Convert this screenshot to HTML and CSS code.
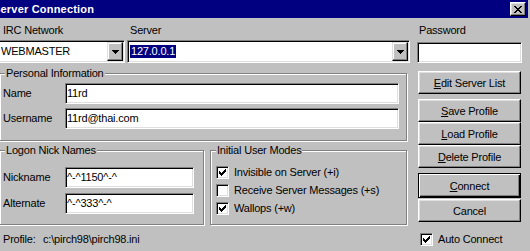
FILE: index.html
```html
<!DOCTYPE html>
<html>
<head>
<meta charset="utf-8">
<title>Server Connection</title>
<link rel="stylesheet" href="styles.css">
</head>
<body>
<div class="window">
  <div class="titlebar">
    <span class="title">Server Connection</span>
    <button class="close" aria-label="Close">
      <svg width="8" height="7" viewBox="0 0 8 7" shape-rendering="crispEdges"><path fill="#000" d="M0 0h2v1h-2z M6 0h2v1h-2z M1 1h2v1h-2z M5 1h2v1h-2z M2 2h4v1h-4z M3 3h2v1h-2z M2 4h4v1h-4z M1 5h2v1h-2z M5 5h2v1h-2z M0 6h2v1h-2z M6 6h2v1h-2z"/></svg>
    </button>
  </div>
  <div class="dialog">
    <div class="col-left">
      <div class="server-grid">
        <span class="lbl lbl-net">IRC Network</span>
        <span class="lbl lbl-server">Server</span>
        <div class="combo">
          <span class="combo-text combo-net">WEBMASTER</span>
          <span class="drop"><svg width="7" height="4" viewBox="0 0 7 4" shape-rendering="crispEdges"><path fill="#000" d="M0 0h7v1h-7z M1 1h5v1h-5z M2 2h3v1h-3z M3 3h1v1h-1z"/></svg></span>
        </div>
        <div class="combo">
          <span class="combo-text combo-server"><span class="sel">127.0.0.1</span></span>
          <span class="drop"><svg width="7" height="4" viewBox="0 0 7 4" shape-rendering="crispEdges"><path fill="#000" d="M0 0h7v1h-7z M1 1h5v1h-5z M2 2h3v1h-3z M3 3h1v1h-1z"/></svg></span>
        </div>
      </div>

      <fieldset class="group group-personal">
        <legend>Personal Information</legend>
        <div class="field-row"><span class="flabel">Name</span><div class="edit edit-wide">11rd</div></div>
        <div class="field-row"><span class="flabel">Username</span><div class="edit edit-wide">11rd@thai.com</div></div>
      </fieldset>

      <div class="groups-row">
        <fieldset class="group group-nick">
          <legend>Logon Nick Names</legend>
          <div class="field-row"><span class="flabel">Nickname</span><div class="edit edit-short">^-^1150^-^</div></div>
          <div class="field-row field-row-gap5"><span class="flabel">Alternate</span><div class="edit edit-short">^-^333^-^</div></div>
        </fieldset>
        <fieldset class="group group-modes">
          <legend>Initial User Modes</legend>
          <div class="modes-list">
            <div class="check">
              <span class="box"><svg width="7" height="7" viewBox="0 0 7 7" shape-rendering="crispEdges"><path fill="#000" d="M6 0h1v1h-1z M5 1h2v1h-2z M0 2h1v1h-1z M4 2h3v1h-3z M0 3h2v1h-2z M3 3h3v1h-3z M0 4h5v1h-5z M1 5h3v1h-3z M2 6h1v1h-1z"/></svg></span>
              <span class="check-label">Invisible on Server (+i)</span>
            </div>
            <div class="check">
              <span class="box"></span>
              <span class="check-label">Receive Server Messages (+s)</span>
            </div>
            <div class="check">
              <span class="box"><svg width="7" height="7" viewBox="0 0 7 7" shape-rendering="crispEdges"><path fill="#000" d="M6 0h1v1h-1z M5 1h2v1h-2z M0 2h1v1h-1z M4 2h3v1h-3z M0 3h2v1h-2z M3 3h3v1h-3z M0 4h5v1h-5z M1 5h3v1h-3z M2 6h1v1h-1z"/></svg></span>
              <span class="check-label">Wallops (+w)</span>
            </div>
          </div>
        </fieldset>
      </div>

      <div class="profile"><span class="profile-label">Profile:</span><span>c:\pirch98\pirch98.ini</span></div>
    </div>

    <div class="col-right">
      <span class="lbl lbl-pw">Password</span>
      <div class="edit edit-pw"></div>
      <button class="btn btn-edit"><span><u>E</u>dit Server List</span></button>
      <button class="btn btn-save"><span><u>S</u>ave Profile</span></button>
      <button class="btn"><span><u>L</u>oad Profile</span></button>
      <button class="btn"><span><u>D</u>elete Profile</span></button>
      <button class="btn btn-default"><span><u>C</u>onnect</span></button>
      <button class="btn btn-cancel"><span>Cancel</span></button>
      <div class="check check-auto">
        <span class="box"><svg width="7" height="7" viewBox="0 0 7 7" shape-rendering="crispEdges"><path fill="#000" d="M6 0h1v1h-1z M5 1h2v1h-2z M0 2h1v1h-1z M4 2h3v1h-3z M0 3h2v1h-2z M3 3h3v1h-3z M0 4h5v1h-5z M1 5h3v1h-3z M2 6h1v1h-1z"/></svg></span>
        <span class="check-label">Auto Connect</span>
      </div>
    </div>
  </div>
</div>
</body>
</html>
```

FILE: styles.css
```css
* { box-sizing: border-box; }

html, body {
  margin: 0;
  padding: 0;
}

body {
  width: 530px;
  height: 251px;
  overflow: hidden;
  background: #c0c0c0;
  color: #000;
  font-family: "Liberation Sans", Arial, sans-serif;
  font-size: 11px;
  line-height: 13px;
  letter-spacing: -0.2px;
}

.window {
  width: 530px;
  height: 251px;
  overflow: hidden;
}

/* ---------- title bar ---------- */
.titlebar {
  width: 528px;
  height: 18px;
  background: #000080;
  display: flex;
  align-items: center;
  justify-content: space-between;
  padding-right: 2px;
}

.title {
  color: #fff;
  font-weight: bold;
  letter-spacing: 0.2px;
  line-height: 18px;
  margin-left: -7px;
  white-space: nowrap;
}

.close {
  width: 16px;
  height: 14px;
  padding: 0;
  margin: 0;
  background: #c0c0c0;
  border: 1px solid;
  border-color: #fff #000 #000 #fff;
  box-shadow: inset -1px -1px 0 #808080, inset 1px 1px 0 #dfdfdf;
  display: flex;
  align-items: center;
  justify-content: center;
}

.close svg { display: block; }

/* ---------- dialog layout ---------- */
.dialog {
  display: flex;
  padding-top: 6px;
}

.col-left {
  width: 412px;
  margin-left: -2px;
  display: flex;
  flex-direction: column;
}

.col-right {
  width: 105px;
  margin-left: 7px;
  display: flex;
  flex-direction: column;
}

.lbl {
  display: block;
  white-space: nowrap;
}

.lbl-net { padding-left: 5px; }
.lbl-server { padding-left: 3px; }
.lbl-pw { padding-left: 2px; }

.server-grid {
  display: grid;
  grid-template-columns: 127px 283px;
  column-gap: 2px;
  row-gap: 3px;
}

/* ---------- sunken controls ---------- */
.combo,
.edit,
.box {
  background: #fff;
  border: 1px solid;
  border-color: #808080 #fff #fff #808080;
  box-shadow: inset 1px 1px 0 #000, inset -1px -1px 0 #dfdfdf;
}

.combo {
  height: 23px;
  padding: 1px;
  display: flex;
}

.combo-text {
  flex: 1;
  padding-top: 3px;
  white-space: nowrap;
  overflow: hidden;
}

.combo-net { padding-left: 1px; }
.combo-server { padding-left: 1px; }

.sel {
  display: inline-block;
  background: #000080;
  color: #fff;
  padding: 0 1px;
  line-height: 13px;
}

.drop {
  width: 16px;
  background: #c0c0c0;
  border: 1px solid;
  border-color: #dfdfdf #000 #000 #dfdfdf;
  box-shadow: inset -1px -1px 0 #808080, inset 1px 1px 0 #fff;
  display: flex;
  align-items: center;
  justify-content: center;
}

.drop svg { display: block; }

.edit {
  height: 21px;
  padding: 3px 1px 0 1px;
  white-space: nowrap;
  overflow: hidden;
}

.edit-wide { width: 334px; }
.edit-short { width: 129px; }
.edit-pw { width: 105px; margin-top: 5px; }

/* ---------- group boxes ---------- */
.group {
  margin: 0;
  padding: 0;
  min-width: 0;
  border: 1px solid #808080;
  box-shadow: inset 1px 1px 0 #fff, 1px 1px 0 #fff;
}

.group legend {
  margin-left: 5px;
  padding: 0 1px;
  background: #c0c0c0;
  line-height: 13px;
  white-space: nowrap;
}

.group-personal {
  width: 408px;
  margin: 4px 0 0 1px;
  padding-top: 3px;
  padding-bottom: 11px;
}

.field-row {
  display: flex;
  align-items: center;
}

.field-row + .field-row { margin-top: 4px; }
.field-row.field-row-gap5 { margin-top: 5px; }

.flabel {
  width: 65px;
  padding-left: 3px;
  white-space: nowrap;
}

.groups-row {
  display: flex;
  gap: 6px;
  margin: 3px 0 0 1px;
}

.group-nick {
  width: 205px;
  padding-top: 10px;
  padding-bottom: 10px;
}

.group-modes {
  width: 197px;
}

.modes-list {
  padding: 9px 0 0 5px;
}

/* ---------- checkboxes ---------- */
.check {
  display: flex;
  align-items: flex-start;
  height: 18px;
}

.box {
  width: 13px;
  height: 13px;
  padding: 2px;
  flex: none;
  display: flex;
}

.box svg { display: block; }

.check-label {
  margin-left: 5px;
  white-space: nowrap;
}

.check-auto {
  margin: 11px 0 0 3px;
}

/* ---------- profile line ---------- */
.profile {
  margin-top: 8px;
  padding-left: 5px;
  white-space: nowrap;
}

.profile-label {
  display: inline-block;
  width: 40px;
}

/* ---------- push buttons ---------- */
.btn {
  width: 103px;
  height: 23px;
  margin: 0 0 0 1px;
  padding: 2px 0 0 0;
  font: inherit;
  letter-spacing: inherit;
  line-height: 13px;
  color: #000;
  background: #c0c0c0;
  border: 1px solid;
  border-color: #fff #000 #000 #fff;
  box-shadow: inset -1px -1px 0 #808080, inset 1px 1px 0 #dfdfdf;
  display: flex;
  align-items: center;
  justify-content: center;
  white-space: nowrap;
}

.btn u { text-decoration: underline; text-underline-offset: 1px; }

.btn-edit { margin-top: 8px; }
.btn-save { margin-top: 5px; }

.btn-default {
  height: 25px;
  margin-top: 5px;
  border: 1px solid #000;
  box-shadow: inset 1px 1px 0 #fff, inset -1px -1px 0 #000, inset -2px -2px 0 #808080;
}

.btn-cancel { margin-top: 1px; }
```
